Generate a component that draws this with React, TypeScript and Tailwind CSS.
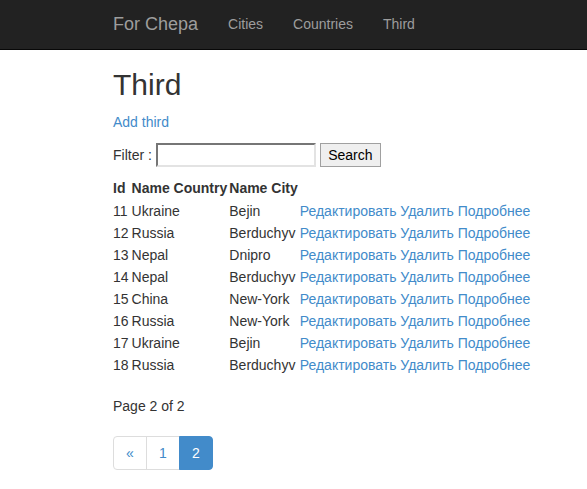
const rows = [
  { id: 11, country: "Ukraine", city: "Bejin" },
  { id: 12, country: "Russia", city: "Berduchyv" },
  { id: 13, country: "Nepal", city: "Dnipro" },
  { id: 14, country: "Nepal", city: "Berduchyv" },
  { id: 15, country: "China", city: "New-York" },
  { id: 16, country: "Russia", city: "New-York" },
  { id: 17, country: "Ukraine", city: "Bejin" },
  { id: 18, country: "Russia", city: "Berduchyv" },
];

export default function App() {
  return (
    <div className="min-h-screen bg-white text-[14px] leading-[20px] text-[#333] font-['Liberation_Sans',Arial,sans-serif]">
      {/* Navbar */}
      <nav className="h-[50px] border-b border-[#080808] bg-[#222]">
        <div className="flex items-start pt-[14px] pl-[113px] leading-[20px]">
          <a className="text-[18px] text-[#9d9d9d]">For Chepa</a>
          <ul className="ml-[15px] flex">
            <li className="px-[15px] text-[#9d9d9d]">Cities</li>
            <li className="px-[15px] text-[#9d9d9d]">Countries</li>
            <li className="px-[15px] text-[#9d9d9d]">Third</li>
          </ul>
        </div>
      </nav>

      <div className="pl-[113px]">
        <h2 className="mt-[18px] mb-[11px] text-[30px] leading-[33px]">Third</h2>
        <p className="mb-[11px]">
          <a className="text-[#428bca]">Add third</a>
        </p>
        <div className="flex items-center">
          <span>Filter :</span>
          <input
            type="text"
            className="ml-[4px] h-[24px] w-[160px] border-2 border-t-[#767676] border-l-[#767676] border-r-[#e3e3e3] border-b-[#e3e3e3] bg-white"
          />
          <button className="ml-[4px] h-[24px] w-[61px] border border-[#a0a0a0] bg-[#efefef] text-[14px] text-black">
            Search
          </button>
        </div>

        <table className="mt-[10px] border-collapse">
          <thead>
            <tr>
              <th className="py-[1px] pr-[3px] text-left font-bold leading-[21px]">Id</th>
              <th className="py-[1px] pr-[2px] text-left font-bold leading-[21px]">Name Country</th>
              <th className="py-[1px] pr-[2px] text-left font-bold leading-[21px]">Name City</th>
              <th></th>
            </tr>
          </thead>
          <tbody>
            {rows.map((r) => (
              <tr key={r.id}>
                <td className="py-[1px] pr-[3px]">{r.id}</td>
                <td className="py-[1px] pr-[2px]">{r.country}</td>
                <td className="py-[1px] pr-[2px]">{r.city}</td>
                <td className="py-[1px] text-[#428bca]">
                  Редактировать Удалить Подробнее
                </td>
              </tr>
            ))}
          </tbody>
        </table>

        <p className="mt-[20px]">Page 2 of 2</p>

        <ul className="mt-[20px] flex">
          <li className="flex h-[34px] w-[34px] items-center justify-center rounded-l-[4px] border border-[#ddd] text-[#428bca]">
            «
          </li>
          <li className="-ml-px flex h-[34px] w-[34px] items-center justify-center border border-[#ddd] text-[#428bca]">
            1
          </li>
          <li className="-ml-px flex h-[34px] w-[34px] items-center justify-center rounded-r-[4px] border border-[#428bca] bg-[#428bca] text-white">
            2
          </li>
        </ul>
      </div>
    </div>
  );
}
